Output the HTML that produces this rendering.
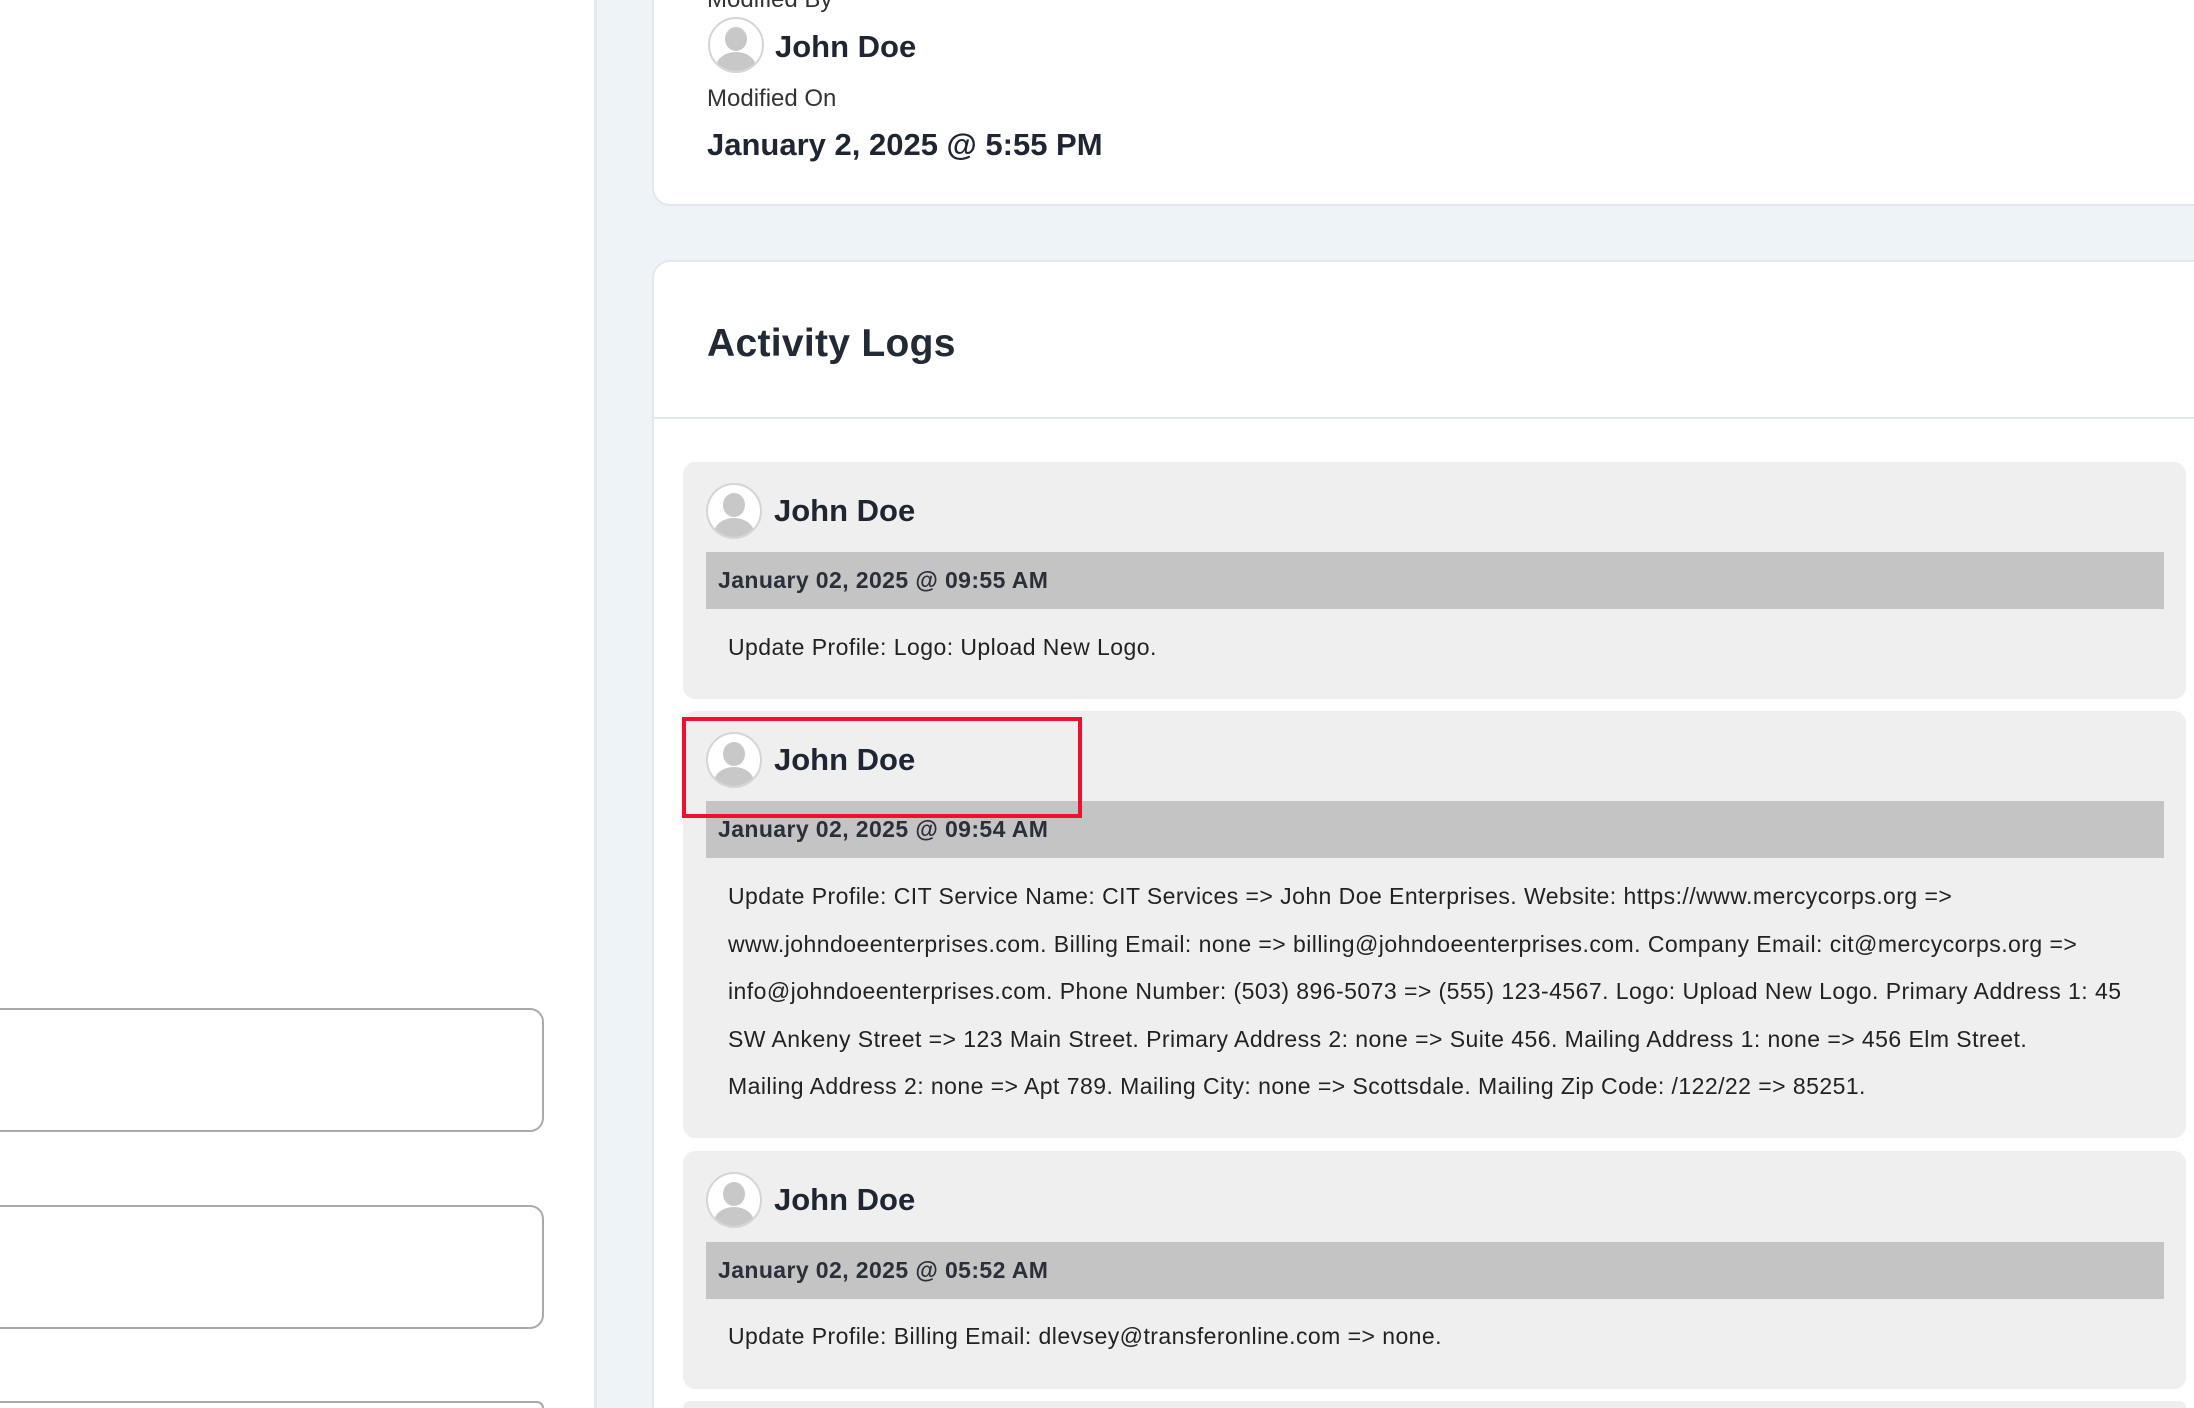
<!DOCTYPE html>
<html style="width:2194px;height:1408px;overflow:hidden"><head><meta charset="utf-8"><style>
*{box-sizing:border-box;margin:0;padding:0}
body{width:2194px;height:1408px;overflow:hidden;background:#edf3f7;font-family:"Liberation Sans",Arial,sans-serif;color:#1e2533;position:relative}
.wrap{position:absolute;left:0;top:0;width:2194px;height:1408px;overflow:hidden}
.left{position:absolute;left:0;top:0;width:597px;height:1408px;background:#fff;border-right:3px solid #e3e9ee}
.inp{position:absolute;left:-20px;width:564px;height:124px;border:2px solid #aaa;border-radius:14px;background:#fff}
.card{position:absolute;left:652px;width:1542px;background:#fff;border-radius:18px 0 0 18px;border:2px solid #e2e8ee;border-right:none}
.av{position:absolute;width:56px;height:56px;border-radius:50%;background:#fff;border:2px solid #d5d5d5;overflow:hidden}
.av:before{content:"";position:absolute;left:15px;top:8px;width:22px;height:24px;border-radius:50%;background:#c8c8c8}
.av:after{content:"";position:absolute;left:6px;top:33px;width:40px;height:30px;border-radius:50% 50% 0 0;background:#c8c8c8}
.name{position:absolute;font-weight:bold;font-size:31px;line-height:36px}
.item{position:absolute;left:683px;width:1503px;background:#efefef;border-radius:12px}
.bar{position:absolute;left:23px;width:1458px;height:57px;background:#c4c4c4;font-weight:bold;font-size:23px;letter-spacing:0.4px;line-height:57px;padding-left:12px;color:#2a2f3a}
.txt{position:absolute;left:45px;font-size:23px;letter-spacing:0.45px;line-height:47.6px;color:#222;width:1430px}
</style></head><body><div class="wrap">
<div class="left">
<div class="inp" style="top:1008px"></div>
<div class="inp" style="top:1205px"></div>
<div class="inp" style="top:1401px;height:7px;border-bottom:none;border-radius:14px 14px 0 0"></div>
</div>
<div class="card" style="top:-30px;height:236px">
<div style="position:absolute;left:53px;top:14px;font-size:24px;color:#333">Modified By</div>
<div class="av" style="left:54px;top:45px"></div>
<div class="name" style="left:121px;top:57px">John Doe</div>
<div style="position:absolute;left:53px;top:113px;font-size:24px;color:#333">Modified On</div>
<div style="position:absolute;left:53px;top:155px;font-size:31px;font-weight:bold">January 2, 2025 @ 5:55 PM</div>
</div>
<div class="card" style="top:260px;height:1148px;border-bottom:none;border-radius:18px 0 0 0">
<div style="position:absolute;left:53px;top:60px;font-size:39px;font-weight:bold;letter-spacing:0.3px;color:#222a36">Activity Logs</div>
<div style="position:absolute;left:0;top:155px;width:100%;height:2px;background:#e3e8ed"></div>
</div>
<div class="item" style="top:462px;height:237px">
<div class="av" style="left:23px;top:21px"></div>
<div class="name" style="left:91px;top:31px">John Doe</div>
<div class="bar" style="top:90px">January 02, 2025 @ 09:55 AM</div>
<div class="txt" style="top:162px">Update Profile: Logo: Upload New Logo.</div>
</div>
<div class="item" style="top:711px;height:427px">
<div class="av" style="left:23px;top:21px"></div>
<div class="name" style="left:91px;top:31px">John Doe</div>
<div class="bar" style="top:90px">January 02, 2025 @ 09:54 AM</div>
<div class="txt" style="top:162px">Update Profile: CIT Service Name: CIT Services =&gt; John Doe Enterprises. Website: https://www.mercycorps.org =&gt; www.johndoeenterprises.com. Billing Email: none =&gt; billing@johndoeenterprises.com. Company Email: cit@mercycorps.org =&gt; info@johndoeenterprises.com. Phone Number: (503) 896-5073 =&gt; (555) 123-4567. Logo: Upload New Logo. Primary Address 1: 45 SW Ankeny Street =&gt; 123 Main Street. Primary Address 2: none =&gt; Suite 456. Mailing Address 1: none =&gt; 456 Elm Street.<br>Mailing Address 2: none =&gt; Apt 789. Mailing City: none =&gt; Scottsdale. Mailing Zip Code: /122/22 =&gt; 85251.</div>
</div>
<div class="item" style="top:1151px;height:238px">
<div class="av" style="left:23px;top:21px"></div>
<div class="name" style="left:91px;top:31px">John Doe</div>
<div class="bar" style="top:91px">January 02, 2025 @ 05:52 AM</div>
<div class="txt" style="top:162px">Update Profile: Billing Email: dlevsey@transferonline.com =&gt; none.</div>
</div>
<div class="item" style="top:1401px;height:7px;border-radius:12px 12px 0 0"></div>
<div style="position:absolute;left:682px;top:717px;width:400px;height:101px;border:4px solid #f0102e"></div>
</div></body></html>
